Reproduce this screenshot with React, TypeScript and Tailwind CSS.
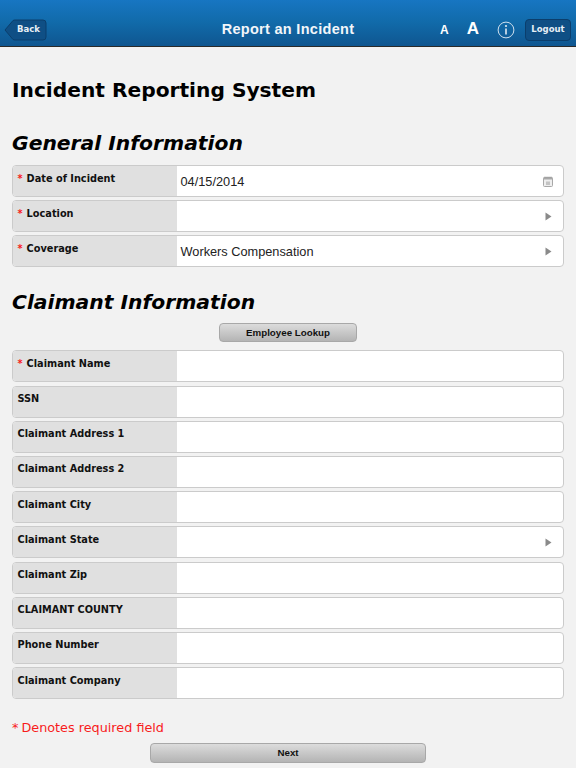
import type { ReactNode } from "react";

function Chevron() {
  return (
    <svg width="7" height="9" viewBox="0 0 7 9" className="shrink-0 mr-[1px]">
      <path d="M0.5 0.5 L6.5 4.5 L0.5 8.5 Z" fill="#8a8a8a" />
    </svg>
  );
}

function Calendar() {
  return (
    <svg width="10" height="11" viewBox="0 0 10 11" className="shrink-0">
      <rect x="0.5" y="1.5" width="9" height="9" rx="1" fill="#eeeeee" stroke="#a8a8a8" />
      <rect x="0.5" y="1.5" width="9" height="2" fill="#a8a8a8" />
      <path d="M2 0.5V2M4 0.5V2M6 0.5V2M8 0.5V2" stroke="#999" strokeWidth="0.8" />
      <path d="M4 5.5V9M6 5.5V9" stroke="#999" strokeWidth="1" />
    </svg>
  );
}

function Row({ label, req, value, icon }: { label: string; req?: boolean; value?: string; icon?: ReactNode }) {
  return (
    <div className="flex h-[32px] rounded-[4px] border-[1.5px] border-[#cbcbcb] bg-white overflow-hidden">
      <div className="w-[163.5px] shrink-0 bg-[#e0e0e0] pl-[4.5px] pt-[5.5px] text-[9.75px] leading-[14px] font-bold text-[#111] font-['DejaVu_Sans',sans-serif] whitespace-nowrap">
        {req && <span className="text-[#f81c1c] mr-[4px]">*</span>}
        {label}
      </div>
      <div className="flex-1 flex items-center justify-between pl-[4px] pr-[10px] pt-[1px] text-[12.75px] text-[#222] font-['Liberation_Sans',sans-serif]">
        <span>{value}</span>
        {icon}
      </div>
    </div>
  );
}

const btn =
  "flex items-center justify-center rounded-[4px] border border-[#a8a8a8] bg-gradient-to-b from-[#dcdcdc] to-[#b4b4b4] pt-[1px] text-[9.75px] font-bold text-[#111] font-['Liberation_Sans',sans-serif]";

const claimant: [string, boolean?, boolean?][] = [
  ["Claimant Name", true],
  ["SSN"],
  ["Claimant Address 1"],
  ["Claimant Address 2"],
  ["Claimant City"],
  ["Claimant State", false, true],
  ["Claimant Zip"],
  ["CLAIMANT COUNTY"],
  ["Phone Number"],
  ["Claimant Company"],
];

export default function App() {
  return (
    <div className="w-[576px] h-[768px] overflow-hidden bg-[#f2f2f2] font-['DejaVu_Sans',sans-serif]">
      <header className="relative h-[47px] flex items-center justify-between border-b border-[#2a2a2a] bg-gradient-to-b from-[#1776c2] via-[#116aa9] to-[#0f5690] pl-[4px] pr-[5px]">
        <div className="relative mt-[13px] h-[22px] w-[43px]">
          <svg width="43" height="22" viewBox="0 0 43 22" className="absolute inset-0">
            <path d="M1 11 L9 1.5 Q10 1 11 1 H39 Q42 1 42 4 V18 Q42 21 39 21 H11 Q10 21 9 20.5 Z" fill="#0f4f85" stroke="#0b3e6c" />
          </svg>
          <span className="absolute left-[13px] top-[3px] text-[8.5px] leading-[14px] font-bold text-[#e6eef5]">Back</span>
        </div>
        <h1 className="absolute left-0 right-0 top-[20px] text-center text-[14.5px] leading-[18px] font-bold text-[#f2f6fa] font-['Liberation_Sans',sans-serif] tracking-[0.3px]">
          Report an Incident
        </h1>
        <div className="relative flex items-center mt-[13px]">
          <span className="text-[12px] font-bold text-white font-['Liberation_Sans',sans-serif] mt-[1px]">A</span>
          <span className="text-[17px] font-bold text-white font-['Liberation_Sans',sans-serif] ml-[18px] -mt-[2px]">A</span>
          <svg width="18" height="18" viewBox="0 0 18 18" className="ml-[18px] mt-[1px]">
            <circle cx="9" cy="9" r="7.9" fill="none" stroke="#cfe0ee" strokeWidth="1" />
            <circle cx="9" cy="5" r="1.1" fill="#dfe9f2" />
            <path d="M9 7.5V13.5" stroke="#dfe9f2" strokeWidth="1.6" />
          </svg>
          <div className="ml-[10px] h-[22px] w-[46px] flex items-center justify-center rounded-[4px] border border-[#0b3e6c] bg-[#0f4f85] text-[8.5px] font-bold text-[#e6eef5]">
            Logout
          </div>
        </div>
      </header>

      <main className="px-[12px]">
        <h2 className="mt-[29px] text-[20.2px] leading-[28px] font-bold text-black">Incident Reporting System</h2>
        <h3 className="mt-[25px] text-[20.3px] leading-[28px] font-bold italic text-black">General Information</h3>
        <div className="mt-[8px] flex flex-col gap-[3.2px]">
          <Row label="Date of Incident" req value="04/15/2014" icon={<Calendar />} />
          <Row label="Location" req icon={<Chevron />} />
          <Row label="Coverage" req value="Workers Compensation" icon={<Chevron />} />
        </div>
        <h3 className="mt-[21px] text-[20.3px] leading-[28px] font-bold italic text-black">Claimant Information</h3>
        <div className="mt-[7px] flex justify-center">
          <div className={`${btn} h-[19px] w-[138px]`}>Employee Lookup</div>
        </div>
        <div className="mt-[8px] flex flex-col gap-[3.2px]">
          {claimant.map(([l, r, c]) => (
            <Row key={l} label={l} req={r} icon={c ? <Chevron /> : undefined} />
          ))}
        </div>
        <p className="mt-[20px] text-[12.8px] leading-[18px] text-[#f81c1c]">
          <span className="mr-[3px]">*</span>Denotes required field
        </p>
        <div className="mt-[6px] flex justify-center">
          <div className={`${btn} h-[20px] w-[276px]`}>Next</div>
        </div>
      </main>
    </div>
  );
}
